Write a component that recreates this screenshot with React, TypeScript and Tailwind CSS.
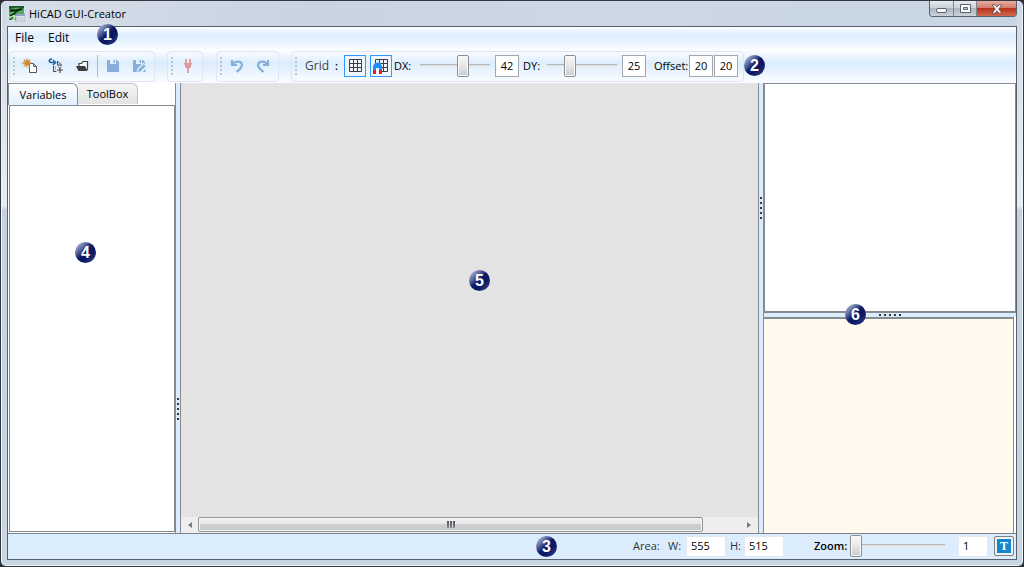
import React, { useState } from 'react';

const font = "font-['Open_Sans','Noto_Sans',sans-serif]";

const sliderBase =
  'h-[22px] appearance-none bg-transparent outline-none bg-[linear-gradient(#b4b8bb,#b4b8bb_34%,#d9dcde_34%,#eceeef)] bg-[length:100%_3px] bg-[position:0_9px] bg-no-repeat ' +
  '[&::-webkit-slider-thumb]:appearance-none [&::-webkit-slider-thumb]:w-3 [&::-webkit-slider-thumb]:h-[22px] [&::-webkit-slider-thumb]:rounded-xs ' +
  '[&::-webkit-slider-thumb]:border [&::-webkit-slider-thumb]:border-[#8b8f93] [&::-webkit-slider-thumb]:bg-[linear-gradient(#f6f6f6,#e9e9e9_45%,#c9cacc)] ' +
  '[&::-webkit-slider-thumb]:shadow-[inset_0_0_0_1px_#fbfbfb]';

const numberBox = 'h-[22px] w-6 shrink-0 border border-[#a5a9ad] bg-white pb-px text-center outline-none';
const areaBox = 'h-[21px] w-10 shrink-0 border border-[#e3e9ef] bg-white px-1 pb-px outline-none';

interface BadgeProps {
  value: number;
  className: string;
}

const Badge: React.FC<BadgeProps> = ({ value, className }) => (
  <span
    className={`absolute z-10 flex size-[21px] items-center justify-center rounded-full bg-[linear-gradient(135deg,#c5cbe0_5%,#5d6aa0_30%,#0d1a66_48%,#0b1760_65%,#3a4b94)] font-['Liberation_Sans',sans-serif] text-base leading-none font-bold text-white ${className}`}
  >
    {value}
  </span>
);

const Grip: React.FC = () => (
  <span className="flex w-1 shrink-0 flex-col gap-[2px]">
    {[0, 1, 2, 3, 4].map((i) => (
      <span key={i} className="size-[2px] bg-[#bfc3ca]" />
    ))}
  </span>
);

const SplitterDots: React.FC<{ className: string }> = ({ className }) => (
  <span className={`flex gap-[3px] ${className}`}>
    {[0, 1, 2, 3, 4].map((i) => (
      <span key={i} className="size-[2px] bg-[#33373b]" />
    ))}
  </span>
);

const ToolGroup: React.FC<{ children: React.ReactNode; className?: string }> = ({ children, className = '' }) => (
  <div className={`flex h-[31px] shrink-0 items-center rounded-sm border border-[#dfe3f3] bg-white/10 pb-px pl-[3px] ${className}`}>
    <Grip />
    {children}
  </div>
);

const ToolButton: React.FC<{ label: string; children: React.ReactNode }> = ({ label, children }) => (
  <button type="button" aria-label={label} className="flex h-[22px] w-[26px] items-center justify-center">
    {children}
  </button>
);

const AppLogo = () => (
  <svg width="16" height="16" viewBox="0 0 16 16">
    <rect width="15" height="14" fill="#4fae58" />
    <path d="M0 0h15v2.500L8 1.500 0 3z" fill="#1d5c2a" />
    <path d="M1 5c3-2 5 1 8-1l4-1" stroke="#10200f" strokeWidth="2.200" fill="none" />
    <path d="M8 5L5 8l-4 2" stroke="#123016" strokeWidth="1.600" fill="none" />
    <path d="M0 11l5-2 2 1-2 4H0z" fill="#d9efd9" />
    <path d="M0 12.500l4-2 1 1-2 2.500H0z" fill="#2b8a3a" />
    <rect x="7" y="8" width="9" height="8" fill="#dfe7ef" stroke="#8393a5" strokeWidth=".6" />
    <path d="M7 8h9v2H7z" fill="#8aa4c2" />
    <path d="M8 12h7M8 14h7" stroke="#a9b5c2" strokeWidth=".7" />
  </svg>
);

const NewIcon = () => (
  <svg width="16" height="16" viewBox="0 0 16 16">
    <path d="M7.500 5.500h4l3 3v6h-7z" fill="#fff" stroke="#5a5a5a" />
    <path d="M11.500 5.500v3h3" fill="none" stroke="#5a5a5a" />
    <path d="M5 .5v9M.5 5h9M1.800 1.800l6.400 6.400M8.200 1.800L1.800 8.200" stroke="#d08a2b" strokeWidth="1.300" />
    <circle cx="5" cy="5" r="2.400" fill="#d08a2b" />
  </svg>
);

const ImportIcon = () => (
  <svg width="16" height="16" viewBox="0 0 16 16">
    <path d="M9 3.500h1l3 3v2M5.500 8v5.500h3" fill="none" stroke="#444" />
    <path d="M9.500 3.500v3.500h3.500" fill="none" stroke="#444" />
    <path d="M7 9h1M10 9h1M7 11h1M9 7h1" stroke="#666" />
    <path d="M12 9v6M9 12h6" stroke="#444" strokeWidth="1.200" />
    <path d="M4 1C.5 1 .5 4.500 3.500 4.500h3M5 2l2.500 2.500L5 7" fill="none" stroke="#1d66a8" strokeWidth="1.600" />
  </svg>
);

const OpenIcon = () => (
  <svg width="16" height="16" viewBox="0 0 16 16">
    <path d="M5 8V5.500h2.500l1.500-2h4.500V12" fill="#f7f8fa" stroke="#444" strokeWidth="1.200" />
    <path d="M2 8h9l2.500 5H4.500z" fill="#3d3d3d" />
  </svg>
);

const SaveIcon = () => (
  <svg width="14" height="14" viewBox="0 0 14 14">
    <path d="M1 1h10l2 2v10H1z" fill="#86b0da" />
    <path d="M4 1h6v4H4z" fill="#e4f1fd" />
    <path d="M7.500 1h1.500v3H7.500z" fill="#86b0da" />
  </svg>
);

const SaveAsIcon = () => (
  <svg width="14" height="14" viewBox="0 0 14 14">
    <path d="M1 1h10l2 2v10H1z" fill="#86b0da" />
    <path d="M4 1h6v4H4z" fill="#e4f1fd" />
    <path d="M7.500 1h1.500v3H7.500z" fill="#86b0da" />
    <path d="M4.500 14l1-4.500 6-6L14 6.500V10l-4 4z" fill="#e4f1fd" />
    <path d="M6 13l.6-2.700 5-5 2 2-5 5z" fill="#86b0da" />
    <path d="M10.500 13h3v-3z" fill="#86b0da" />
  </svg>
);

const PlugIcon = () => (
  <svg width="10" height="14" viewBox="0 0 10 14">
    <path d="M3 0v4M7 0v4" stroke="#e2989b" strokeWidth="1.800" />
    <path d="M1 4h8v1.500H8V8L6.500 9.500h-3L2 8V5.500H1z" fill="#e2989b" />
    <path d="M5 9v5" stroke="#e2989b" strokeWidth="1.800" />
  </svg>
);

const TurnIcon: React.FC<{ className?: string }> = ({ className }) => (
  <svg width="14" height="14" viewBox="0 0 14 14" className={className}>
    <path d="M2 1v5h5M2.500 5.500C5 1.500 11.500 1.500 12 5.800 12.200 9 9 10.800 6.500 13" fill="none" stroke="#86b0da" strokeWidth="2.200" />
  </svg>
);

const GridIcon: React.FC<{ magnet?: boolean }> = ({ magnet }) => (
  <svg width="20" height="20" viewBox="0 0 20 20">
    <path d="M4.500 3.500h12v12h-12zM8.500 3.500v12M12.500 3.500v12M4.500 7.500h12M4.500 11.500h12" fill="none" stroke="#403c40" />
    {magnet && (
      <g>
        <path d="M2 14v-3a4.500 4.500 0 0 1 9 0v3H8v-2H5v2z" fill="#1e90ff" />
        <path d="M2 14h3v4H2zM8 14h3v4H8z" fill="#e81c1c" />
        <path d="M5 12h3v6H5z" fill="#eef5fd" />
      </g>
    )}
  </svg>
);

const menus = ['File', 'Edit'];

export default function App() {
  const [dx, setDx] = useState(42);
  const [dy, setDy] = useState(25);
  const [zoom, setZoom] = useState(1);
  const [tab, setTab] = useState('Variables');

  return (
    <div className={`h-screen bg-[#2b2f35] text-[11px] leading-4 text-black ${font}`}>
      <div className="flex h-full flex-col rounded-md border border-[#35393f] bg-[linear-gradient(#cbd7e5,#d3dde8_30px,#e9edf4_205px,#c4d2e2_209px,#c8d6e4)] px-[6px] pb-[6px] shadow-[inset_0_0_0_1px_#eef3f8]">
        <header className="flex h-[25px] shrink-0 items-center bg-[linear-gradient(90deg,#d6dee9,#c9d4e1_30%,#ccd8e4_60%,#c8d5e3)] pl-[2px]">
          <AppLogo />
          <h1 className="ml-1 flex-1">HiCAD GUI-Creator</h1>
          <div className="flex h-4 self-start overflow-hidden rounded-b-sm border border-t-0 border-[#59616b]">
            <button type="button" aria-label="Minimize" className="flex w-6 items-center justify-center border-r border-[#7b8590] bg-[linear-gradient(#e5eaf0,#cbd1d9_48%,#adb6c0_50%,#c9d1da)]">
              <span className="mt-1 h-[5px] w-[11px] rounded-xs border border-[#5a616b] bg-white" />
            </button>
            <button type="button" aria-label="Maximize" className="flex w-[23px] items-center justify-center border-r border-[#7b8590] bg-[linear-gradient(#e5eaf0,#cbd1d9_48%,#adb6c0_50%,#c9d1da)]">
              <svg width="11" height="9" viewBox="0 0 11 9">
                <path d="M.5.5h10v8H.5z" fill="#fff" stroke="#5a616b" />
                <path d="M3.500 3.500h4v2h-4z" fill="#c4ccd6" stroke="#5a616b" />
              </svg>
            </button>
            <button type="button" aria-label="Close" className="flex w-[39px] items-center justify-center bg-[linear-gradient(#e7aea1,#d27a69_48%,#b9321c_50%,#d2694f)]">
              <svg width="12" height="10" viewBox="0 0 12 10">
                <path d="M1 .8h3L6 3.200 8 .8h3L7.700 5 11 9.200H8L6 6.800 4 9.200H1L4.300 5z" fill="#fff" stroke="#5b4850" strokeWidth=".8" />
              </svg>
            </button>
          </div>
        </header>

        <div className="flex min-h-0 flex-1 flex-col border border-[#59616c] bg-[#dbecfd]">
          <nav className="relative flex h-[23px] shrink-0 items-center gap-[14px] bg-[linear-gradient(#fcfeff,#dcedfe_38%,#fafdff)] pb-[2px] pl-[7px] text-xs">
            {menus.map((item) => (
              <button key={item} type="button">
                {item}
              </button>
            ))}
            <Badge value={1} className="top-[-3px] left-[89px]" />
          </nav>

          <div className="flex h-[33px] shrink-0 items-center bg-[linear-gradient(#fdfeff,#d9ecfe_40%,#fbfdff)] pl-px">
            <ToolGroup className="mr-3 w-[146px]">
              <div className="flex">
                <ToolButton label="New"><NewIcon /></ToolButton>
                <ToolButton label="Import"><ImportIcon /></ToolButton>
                <ToolButton label="Open"><OpenIcon /></ToolButton>
              </div>
              <span className="ml-[2px] h-[22px] w-px bg-[#aebac6]" />
              <div className="ml-[2px] flex">
                <ToolButton label="Save"><SaveIcon /></ToolButton>
                <ToolButton label="Save as"><SaveAsIcon /></ToolButton>
              </div>
            </ToolGroup>
            <ToolGroup className="mr-[13px] w-9">
              <ToolButton label="Connect"><PlugIcon /></ToolButton>
            </ToolGroup>
            <ToolGroup className="mr-3 w-[63px]">
              <ToolButton label="Undo"><TurnIcon /></ToolButton>
              <ToolButton label="Redo"><TurnIcon className="-scale-x-100" /></ToolButton>
            </ToolGroup>
            <ToolGroup className="relative w-[453px]">
              <span className="ml-[6px] w-[30px] text-xs text-[#444]">Grid</span>
              <span className="w-[9px] font-semibold">:</span>
              <button type="button" aria-label="Show grid" className="size-[22px] border border-[#3399ff] bg-[#eef5fd]">
                <GridIcon />
              </button>
              <button type="button" aria-label="Snap to grid" className="ml-1 size-[22px] border border-[#3399ff] bg-[#eef5fd]">
                <GridIcon magnet />
              </button>
              <label htmlFor="dx" className="ml-[2px] w-[26px]">DX:</label>
              <input id="dx" type="range" min={10} max={60} value={dx} onChange={(e) => setDx(+e.target.value)} className={`w-[70px] ${sliderBase}`} />
              <input aria-label="DX value" value={dx} onChange={(e) => setDx(+e.target.value)} className={`ml-[5px] ${numberBox}`} />
              <label htmlFor="dy" className="ml-1 w-6">DY:</label>
              <input id="dy" type="range" min={10} max={60} value={dy} onChange={(e) => setDy(+e.target.value)} className={`w-[70px] ${sliderBase}`} />
              <input aria-label="DY value" value={dy} onChange={(e) => setDy(+e.target.value)} className={`ml-[5px] ${numberBox}`} />
              <label htmlFor="offset-x" className="ml-2 w-[35px]">Offset:</label>
              <input id="offset-x" defaultValue="20" className={numberBox} />
              <input aria-label="Offset Y" defaultValue="20" className={`ml-px ${numberBox}`} />
              <Badge value={2} className="top-[3px] -right-[22px]" />
            </ToolGroup>
          </div>

          <main className="flex min-h-0 flex-1">
            <aside className="relative flex w-[168px] shrink-0 flex-col border-r border-[#858b91] bg-white">
              <div role="tablist" className="flex h-[22px] items-end">
                {['Variables', 'ToolBox'].map((name) => (
                  <button
                    key={name}
                    type="button"
                    role="tab"
                    aria-selected={tab === name}
                    onClick={() => setTab(name)}
                    className={`rounded-tr-md border border-b-0 ${
                      tab === name
                        ? 'h-[22px] w-[70px] border-[#858b91] bg-[linear-gradient(#fff,#e2f1fd)]'
                        : 'mb-px h-[21px] w-[60px] border-l-0 border-[#c0c3c6] bg-[linear-gradient(#f5f5f5,#e2e2e2)] pb-px'
                    }`}
                  >
                    {name}
                  </button>
                ))}
              </div>
              <div role="tabpanel" className="mb-px ml-px flex-1 border border-[#858b91]" />
              <Badge value={4} className="top-[159px] left-[67px]" />
            </aside>

            <div className="flex w-[5px] shrink-0 flex-col items-center border-r border-[#858b91] pt-[315px]">
              <SplitterDots className="flex-col" />
            </div>

            <section className="relative flex min-w-0 flex-1 flex-col bg-[#e3e3e3]">
              <div className="flex-1" />
              <div className="flex h-4 shrink-0 items-start bg-[#eeeeee]">
                <button type="button" aria-label="Scroll left" className="flex h-[15px] w-[17px] items-center justify-center">
                  <svg width="4" height="6" viewBox="0 0 4 6"><path d="M4 0v6L0 3z" fill="#777b80" /></svg>
                </button>
                <div className="flex-1">
                  <div className="flex h-[15px] w-[93.4%] items-center justify-center gap-px rounded-xs border border-[#92969a] bg-[linear-gradient(#f4f4f4,#e4e4e4_48%,#cecfd0_50%,#c8c9cb)] shadow-[inset_0_0_0_1px_#f7f7f7]">
                    {[0, 1, 2].map((i) => (
                      <span key={i} className="h-[7px] w-[2px] bg-[linear-gradient(#4c5054,#8c9094)]" />
                    ))}
                  </div>
                </div>
                <button type="button" aria-label="Scroll right" className="flex h-[15px] w-[19px] items-center justify-center">
                  <svg width="4" height="6" viewBox="0 0 4 6"><path d="M0 0v6l4-3z" fill="#777b80" /></svg>
                </button>
              </div>
              <Badge value={5} className="top-[187px] left-[288px]" />
            </section>

            <div className="flex w-[5px] shrink-0 flex-col items-center border-l border-[#858b91] pt-[114px]">
              <SplitterDots className="flex-col" />
            </div>

            <aside className="flex w-[253px] shrink-0 flex-col border-l border-[#858b91]">
              <div className="h-[230px] border border-b-2 border-[#858b91] bg-white" />
              <div className="relative flex h-[4px] shrink-0 items-center justify-center">
                <SplitterDots className="" />
                <Badge value={6} className="-top-[9px] left-[81px]" />
              </div>
              <div className="flex-1 bg-white pr-[2px]">
                <div className="h-full border-t-2 border-r border-[#858b91] bg-[#fff9ee]" />
              </div>
            </aside>
          </main>

          <footer className="relative flex h-[26px] shrink-0 items-center justify-end border-t border-[#7c838b] pr-[2px] pb-px text-[#333]">
            <span className="w-[35px]">Area:</span>
            <label htmlFor="area-w" className="w-[18px]">W:</label>
            <input id="area-w" defaultValue="555" className={`${areaBox} text-black`} />
            <label htmlFor="area-h" className="ml-1 w-[14px]">H:</label>
            <input id="area-h" defaultValue="515" className={`${areaBox} text-black`} />
            <label htmlFor="zoom" className="ml-[30px] w-9 font-semibold text-black">Zoom:</label>
            <input id="zoom" type="range" min={1} max={10} value={zoom} onChange={(e) => setZoom(+e.target.value)} className={`w-[95px] ${sliderBase}`} />
            <input aria-label="Zoom value" value={zoom} onChange={(e) => setZoom(+e.target.value)} className="ml-[13px] h-[21px] w-[30px] border border-[#e3e9ef] bg-white px-1 pb-px text-black outline-none" />
            <button type="button" aria-label="Text" className="ml-[6px] flex size-5 items-center justify-center rounded-xs border border-[#7d8185] bg-[#f2f2f2]">
              <span className="flex size-[14px] items-center justify-center bg-[#1287cf] font-['Liberation_Serif',serif] text-xs leading-none font-bold text-white">T</span>
            </button>
            <Badge value={3} className="top-[2px] left-[528px]" />
          </footer>
        </div>
      </div>
    </div>
  );
}
